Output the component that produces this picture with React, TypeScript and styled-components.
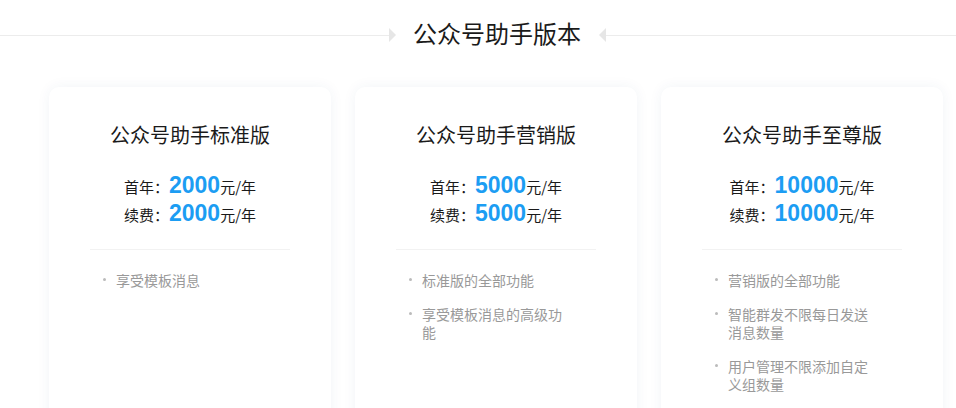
import React from 'react';
import styled, { createGlobalStyle } from 'styled-components';

type Plan = {
  name: string;
  price: string;
  features: string[];
};

const plans: Plan[] = [
  { name: '公众号助手标准版', price: '2000', features: ['享受模板消息'] },
  { name: '公众号助手营销版', price: '5000', features: ['标准版的全部功能', '享受模板消息的高级功能'] },
  {
    name: '公众号助手至尊版',
    price: '10000',
    features: ['营销版的全部功能', '智能群发不限每日发送消息数量', '用户管理不限添加自定义组数量'],
  },
];

const GlobalStyle = createGlobalStyle`
  html, body {
    margin: 0;
    padding: 0;
    background: #ffffff;
    font-family: "Noto Sans", "Noto Sans CJK SC", sans-serif;
    overflow: hidden;
  }
`;

export default function App() {
  return (
    <>
      <GlobalStyle />
      <StyledPage>
        <StyledHeader>
          <StyledLine />
          <StyledArrow $dir="right" />
          <StyledHeading>公众号助手版本</StyledHeading>
          <StyledArrow $dir="left" />
          <StyledLine />
        </StyledHeader>
        <StyledCards>
          {plans.map((plan) => (
            <StyledCard key={plan.name}>
              <StyledCardTitle>{plan.name}</StyledCardTitle>
              <StyledPrices>
                <StyledPriceRow>
                  首年：<StyledAmount>{plan.price}</StyledAmount>元/年
                </StyledPriceRow>
                <StyledPriceRow>
                  续费：<StyledAmount>{plan.price}</StyledAmount>元/年
                </StyledPriceRow>
              </StyledPrices>
              <StyledDivider />
              <StyledFeatures>
                {plan.features.map((f) => (
                  <StyledFeature key={f}>{f}</StyledFeature>
                ))}
              </StyledFeatures>
            </StyledCard>
          ))}
        </StyledCards>
      </StyledPage>
    </>
  );
}

const StyledPage = styled.div`
  width: 956px;
  height: 408px;
  padding-top: 17px;
  box-sizing: border-box;
`;

const StyledHeader = styled.div`
  display: grid;
  grid-template-columns: 389px auto auto auto 1fr;
  align-items: center;
  height: 32px;
`;

const StyledLine = styled.div`
  height: 1px;
  margin-top: 4px;
  background: #ececec;
`;

const StyledArrow = styled.div<{ $dir: 'left' | 'right' }>`
  width: 0;
  height: 0;
  margin-top: 4px;
  border-top: 7px solid transparent;
  border-bottom: 7px solid transparent;
  ${({ $dir }) =>
    $dir === 'right' ? 'border-left: 7px solid #e6e6e6;' : 'border-right: 7px solid #e6e6e6;'}
`;

const StyledHeading = styled.h1`
  margin: 0 18px 0 17px;
  font-family: "Noto Sans CJK SC", sans-serif;
  font-size: 24px;
  font-weight: 400;
  line-height: 32px;
  color: #1a1a1a;
`;

const StyledCards = styled.div`
  display: flex;
  gap: 24px;
  padding-left: 49px;
  margin-top: 38px;
`;

const StyledCard = styled.div`
  width: 282px;
  min-height: 360px;
  padding-top: 34px;
  box-sizing: border-box;
  background: #ffffff;
  border-radius: 10px;
  box-shadow: 0 0 14px rgba(40, 70, 120, 0.06);
  display: flex;
  flex-direction: column;
  align-items: center;
`;

const StyledCardTitle = styled.h2`
  margin: 0;
  font-family: "Noto Sans CJK SC", sans-serif;
  font-size: 20px;
  font-weight: 400;
  line-height: 28px;
  color: #1a1a1a;
`;

const StyledPrices = styled.div`
  margin-top: 24px;
  display: flex;
  flex-direction: column;
  align-items: center;
`;

const StyledPriceRow = styled.div`
  height: 28px;
  font-family: "Noto Sans CJK SC", sans-serif;
  font-size: 15px;
  line-height: 28px;
  color: #1a1a1a;
  white-space: nowrap;
`;

const StyledAmount = styled.span`
  font-family: "Liberation Sans", sans-serif;
  font-size: 23px;
  font-weight: 700;
  line-height: 24px;
  color: #1c9df3;
`;

const StyledDivider = styled.div`
  width: 200px;
  height: 1px;
  margin-top: 20px;
  background: #f2f2f2;
`;

const StyledFeatures = styled.ul`
  list-style: none;
  width: 200px;
  margin: 0;
  padding: 21px 26px 0 13px;
  box-sizing: border-box;
  display: flex;
  flex-direction: column;
  gap: 16px;
`;

const StyledFeature = styled.li`
  display: flex;
  font-family: "Noto Sans CJK SC", sans-serif;
  font-size: 14px;
  line-height: 18px;
  color: #999999;

  &::before {
    content: '';
    flex: none;
    width: 3px;
    height: 3px;
    margin: 7px 10px 0 0;
    border-radius: 50%;
    background: #bbbbbb;
  }
`;
